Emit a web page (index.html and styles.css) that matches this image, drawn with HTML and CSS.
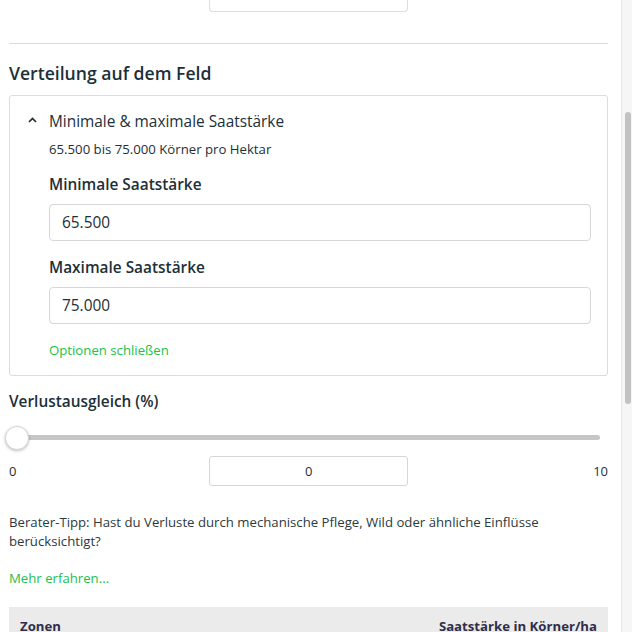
FILE: index.html
```html
<!DOCTYPE html>
<html lang="de">
<head>
  <meta charset="UTF-8">
  <meta name="viewport" content="width=device-width, initial-scale=1.0">
  <title>Saatstärke</title>
  <link rel="stylesheet" href="styles.css">
</head>
<body>
  <div class="frame">
    <main class="content">
      <!-- Rest vom Eingabefeld oben -->
      <div class="top-input"></div>
      <hr class="divider">

      <h2>Verteilung auf dem Feld</h2>

      <!-- Min / Max -->
      <div class="card">
        <div class="card-head">
          <span class="chevron">
            <svg width="9" height="6" viewBox="0 0 9 6"><polyline points="1,5 4.5,1.5 8,5" fill="none" stroke="#1d3038" stroke-width="1.7"/></svg>
          </span>
          <span class="card-title">Minimale &amp; maximale Saatstärke</span>
        </div>
        <div class="card-body">
          <p class="summary">65.500 bis 75.000 Körner pro Hektar</p>
          <label class="field-label">Minimale Saatstärke</label>
          <input class="text-input" type="text" value="65.500">
          <label class="field-label">Maximale Saatstärke</label>
          <input class="text-input" type="text" value="75.000">
          <a href="#" class="link close-link">Optionen schließen</a>
        </div>
      </div>

      <!-- Verlustausgleich -->
      <h3 class="section-label">Verlustausgleich (%)</h3>
      <div class="slider">
        <div class="track"></div>
        <div class="thumb"></div>
      </div>
      <div class="slider-row">
        <span>0</span>
        <input class="value-input" type="text" value="0">
        <span>10</span>
      </div>

      <p class="tip">Berater-Tipp: Hast du Verluste durch mechanische Pflege, Wild oder ähnliche Einflüsse berücksichtigt?</p>
      <a href="#" class="link more-link">Mehr erfahren...</a>

      <table class="zones">
        <thead>
          <tr>
            <th>Zonen</th>
            <th class="right">Saatstärke in Körner/ha</th>
          </tr>
        </thead>
      </table>
    </main>

    <div class="scrollbar">
      <div class="scroll-thumb"></div>
    </div>
  </div>
</body>
</html>
```

FILE: styles.css
```css
body {
  margin: 0;
  font-family: "Open Sans", Arial, sans-serif;
  color: #2b3a40;
  background: #fff;
}
.frame {
  display: flex;
  height: 632px;
  overflow: hidden;
}
.content {
  flex: 1;
  padding: 0 13px 0 9px;
}

.top-input {
  margin-left: 200px;
  width: 197px;
  height: 11px;
  border: 1px solid #ddd;
  border-top: none;
  border-radius: 0 0 4px 4px;
}
.divider {
  margin: 31px 0 0;
  border: none;
  border-top: 1px solid #dcdcdc;
}

h2 {
  margin: 17px 0 10px;
  font-size: 17.6px;
  line-height: 24px;
  font-weight: 600;
  color: #1d3038;
}

.card {
  border: 1px solid #dcdcdc;
  border-radius: 3px;
  padding: 14px 16px 16px 18px;
}
.card-head {
  display: flex;
  align-items: center;
  height: 22px;
}
.chevron {
  width: 21px;
  display: flex;
  align-items: center;
  margin-top: -2px;
}
.card-title {
  font-size: 15.4px;
  color: #1d3038;
}
.card-body {
  margin-left: 21px;
}
.summary {
  margin: 8px 0 0;
  font-size: 13.2px;
  line-height: 18px;
  color: #1d3038;
}
.field-label {
  display: block;
  margin-top: 16px;
  font-size: 15.4px;
  line-height: 22px;
  font-weight: 600;
  color: #1d3038;
}
.text-input {
  display: block;
  box-sizing: border-box;
  width: 100%;
  height: 37px;
  margin-top: 8px;
  padding: 0 12px;
  border: 1px solid #d6d6d6;
  border-radius: 4px;
  font-family: inherit;
  font-size: 15.4px;
  color: #1d3038;
}
.link {
  display: block;
  font-size: 13.2px;
  line-height: 18px;
  color: #22c14a;
  text-decoration: none;
}
.close-link {
  margin-top: 17px;
}

.section-label {
  margin: 15px 0 0;
  font-size: 15.4px;
  line-height: 22px;
  font-weight: 600;
  color: #1d3038;
}

/* Regler */
.slider {
  position: relative;
  height: 15px;
  padding-top: 9px;
  margin-top: 13px;
}
.track {
  margin: 0 8px 0 8px;
  height: 5px;
  border-radius: 3px;
  background: #c6c6c6;
}
.thumb {
  position: absolute;
  left: -4px;
  top: 0;
  width: 24px;
  height: 24px;
  box-sizing: border-box;
  border-radius: 50%;
  background: #fff;
  border: 1px solid #d4d4d4;
  box-shadow: 0 1px 3px rgba(0, 0, 0, 0.25);
}
.slider-row {
  display: flex;
  justify-content: space-between;
  align-items: center;
  margin-top: 6px;
  font-size: 13px;
  color: #1d3038;
}
.value-input {
  box-sizing: border-box;
  width: 199px;
  height: 30px;
  margin-left: 8px;
  border: 1px solid #d6d6d6;
  border-radius: 3px;
  text-align: center;
  font-family: inherit;
  font-size: 13px;
  color: #1d3038;
}

.tip {
  margin: 27px 0 0;
  font-size: 13.2px;
  line-height: 19px;
  color: #2b3a40;
}
.more-link {
  margin-top: 18px;
}

.zones {
  width: 100%;
  margin-top: 20px;
  border-collapse: collapse;
  background: #ebebeb;
}
.zones th {
  padding: 10px 11px 10px;
  text-align: left;
  font-size: 13.2px;
  font-weight: 700;
  color: #2f2e4a;
}
.zones th.right {
  text-align: right;
}

/* Scrollbar */
.scrollbar {
  width: 10px;
  background: #f6f6f6;
  border-left: 1px solid #e6e6e6;
  position: relative;
}
.scroll-thumb {
  position: absolute;
  top: 112px;
  left: 3px;
  width: 6px;
  height: 292px;
  border-radius: 3px;
  background: #c2c2c2;
}
```
